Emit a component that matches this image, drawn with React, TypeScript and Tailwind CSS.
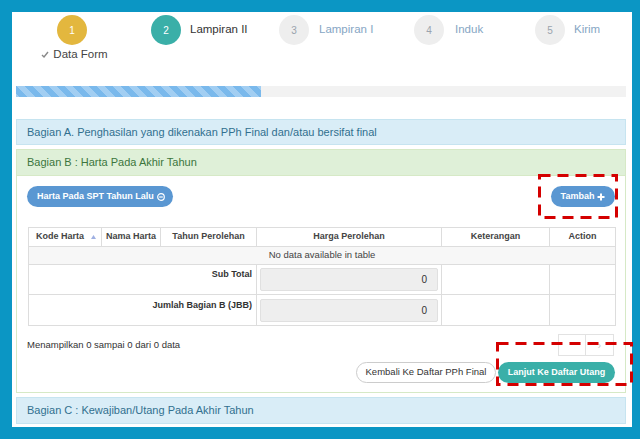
import React from "react";

const font = { fontFamily: '"Liberation Sans", Arial, sans-serif' };

function StepCircle({ n, tone }: { n: number; tone: "gold" | "teal" | "idle" }) {
  const cls =
    tone === "gold"
      ? "bg-[#e3b73e] text-white"
      : tone === "teal"
      ? "bg-[#3aafa8] text-white"
      : "bg-[#eeeeee] text-[#9aa3ad]";
  return (
    <div className={`flex h-[30px] w-[30px] shrink-0 items-center justify-center rounded-full text-[10px] ${cls}`}>
      {n}
    </div>
  );
}

function DashBox({ className }: { className: string }) {
  return (
    <svg className={`pointer-events-none absolute ${className}`} preserveAspectRatio="none">
      <rect
        x="1.5"
        y="1.5"
        width="calc(100% - 3px)"
        height="calc(100% - 3px)"
        fill="none"
        stroke="#d40000"
        strokeWidth="3"
        strokeDasharray="11 7"
      />
    </svg>
  );
}

function Stepper() {
  return (
    <div className="flex h-[74px] items-start pt-[3px]">
      <div className="ml-[26px] flex w-[60px] flex-col items-center">
        <StepCircle n={1} tone="gold" />
        <div className="ml-[5px] mt-[2px] flex items-center gap-[4px] whitespace-nowrap text-[11.5px] leading-[14px] text-[#444]">
          <svg width="8" height="7" viewBox="0 0 8 7">
            <polyline points="1,4 3,6 7,1" fill="none" stroke="#888" strokeWidth="1.4" />
          </svg>
          Data Form
        </div>
      </div>
      <div className="ml-[49px] flex w-[128px] items-center">
        <StepCircle n={2} tone="teal" />
        <span className="ml-[9px] whitespace-nowrap text-[11.5px] text-[#333]">Lampiran II</span>
      </div>
      <div className="flex w-[135px] items-center">
        <StepCircle n={3} tone="idle" />
        <span className="ml-[10px] whitespace-nowrap text-[11.5px] text-[#86a6c4]">Lampiran I</span>
      </div>
      <div className="flex w-[121px] items-center">
        <StepCircle n={4} tone="idle" />
        <span className="ml-[11px] whitespace-nowrap text-[11.5px] text-[#86a6c4]">Induk</span>
      </div>
      <div className="flex items-center">
        <StepCircle n={5} tone="idle" />
        <span className="ml-[9px] whitespace-nowrap text-[11.5px] text-[#86a6c4]">Kirim</span>
      </div>
    </div>
  );
}

function HargaInput() {
  return (
    <div className="flex h-[23px] items-center justify-end rounded-[2px] border border-[#e0e0e0] bg-[#eeeeee] pr-[10px] text-[10px] text-[#333]">
      0
    </div>
  );
}

export default function App() {
  return (
    <div style={font} className="relative h-[439px] w-[640px] overflow-hidden bg-[#0b96c4] pl-[12px] pr-[8px] pt-[12px]">
      <div className="h-[415px] bg-white pl-[4px] pr-[6px]">
        <Stepper />

        <div className="h-[11px] bg-[#f2f2f2]">
          <div className="h-full w-[245px] bg-[#7ab9ec] bg-[linear-gradient(45deg,rgba(255,255,255,.3)_25%,transparent_25%,transparent_50%,rgba(255,255,255,.3)_50%,rgba(255,255,255,.3)_75%,transparent_75%,transparent)] bg-[length:16px_16px]" />
        </div>

        <div className="mt-[22px] flex h-[26px] items-center border border-[#c6e4f0] bg-[#d9edf7] pl-[10px] text-[11px] text-[#31708f]">
          Bagian A. Penghasilan yang dikenakan PPh Final dan/atau bersifat final
        </div>

        <div className="mt-[4px] border border-[#d6e9c6]">
          <div className="flex h-[26px] items-center border-b border-[#d6e9c6] bg-[#dff0d8] pl-[10px] text-[11px] text-[#3c763d]">
            Bagian B : Harta Pada Akhir Tahun
          </div>
          <div className="pb-[9px] pl-[11px] pr-[10px] pt-[10px]">
            <div className="flex items-center justify-between">
              <button className="ml-[-1px] flex h-[21px] items-center gap-[3px] rounded-full bg-[#5a97d2] pl-[10px] pr-[8px] text-[9px] font-bold text-white">
                Harta Pada SPT Tahun Lalu
                <svg width="8" height="8" viewBox="0 0 8 8">
                  <circle cx="4" cy="4" r="3.3" fill="none" stroke="#fff" strokeWidth="1.2" />
                  <line x1="2.2" y1="4" x2="5.8" y2="4" stroke="#fff" strokeWidth="1.2" />
                </svg>
              </button>
              <button className="flex h-[21px] w-[64px] items-center justify-center gap-[3px] rounded-full bg-[#5a97d2] text-[9px] font-bold text-white">
                Tambah
                <svg width="8" height="8" viewBox="0 0 8 8">
                  <path d="M4 0.5v7M0.5 4h7" stroke="#fff" strokeWidth="2" />
                </svg>
              </button>
            </div>

            <table className="mt-[20px] w-[587px] table-fixed border-collapse text-[#333]">
              <colgroup>
                <col className="w-[73px]" />
                <col className="w-[59px]" />
                <col className="w-[96px]" />
                <col className="w-[185px]" />
                <col className="w-[108px]" />
                <col className="w-[66px]" />
              </colgroup>
              <thead>
                <tr className="h-[19px] text-[9px] font-bold text-[#444]">
                  <th className="border border-[#dddddd] pl-[7px] text-left">
                    <span className="flex items-center justify-between pr-[5px]">
                      Kode Harta
                      <svg width="5" height="4" viewBox="0 0 5 4">
                        <polygon points="2.5,0 5,4 0,4" fill="#9fb0e2" />
                      </svg>
                    </span>
                  </th>
                  <th className="border border-[#dddddd] text-center">Nama Harta</th>
                  <th className="border border-[#dddddd] text-center">Tahun Perolehan</th>
                  <th className="border border-[#dddddd] text-center">Harga Perolehan</th>
                  <th className="border border-[#dddddd] text-center">Keterangan</th>
                  <th className="border border-[#dddddd] text-center">Action</th>
                </tr>
              </thead>
              <tbody>
                <tr className="h-[18px] bg-[#f7f7f7]">
                  <td colSpan={6} className="border border-[#dddddd] text-center text-[9.5px] text-[#444]">
                    No data available in table
                  </td>
                </tr>
                <tr className="h-[30px]">
                  <td colSpan={3} className="border border-[#dddddd] pr-[4px] pt-[3px] text-right align-top text-[9px] font-bold">
                    Sub Total
                  </td>
                  <td className="border border-[#dddddd] px-[3px]">
                    <HargaInput />
                  </td>
                  <td className="border border-[#dddddd]" />
                  <td className="border border-[#dddddd]" />
                </tr>
                <tr className="h-[31px]">
                  <td colSpan={3} className="border border-[#dddddd] pr-[4px] pt-[4px] text-right align-top text-[9px] font-bold">
                    Jumlah Bagian B (JBB)
                  </td>
                  <td className="border border-[#dddddd] px-[3px]">
                    <HargaInput />
                  </td>
                  <td className="border border-[#dddddd]" />
                  <td className="border border-[#dddddd]" />
                </tr>
              </tbody>
            </table>

            <div className="mt-[8px] flex h-[22px] items-center justify-between">
              <span className="ml-[-1px] text-[9.5px] text-[#333]">Menampilkan 0 sampai 0 dari 0 data</span>
              <div className="mr-[1px] flex h-[22px]">
                <div className="w-[28px] border border-[#e2e2e2]" />
                <div className="flex w-[28px] items-center justify-center border border-l-0 border-[#e2e2e2] text-[10px] text-[#c8c8c8]">
                  ›
                </div>
              </div>
            </div>

            <div className="mt-[6px] flex justify-end gap-[2px]">
              <button className="h-[21px] w-[140px] rounded-full border border-[#cccccc] bg-white text-[9.5px] text-[#333]">
                Kembali Ke Daftar PPh Final
              </button>
              <button className="h-[21px] w-[117px] rounded-full bg-[#3aafa8] text-[9px] font-bold text-white">
                Lanjut Ke Daftar Utang
              </button>
            </div>
          </div>
        </div>

        <div className="mt-[4px] flex h-[27px] items-center border border-[#c6e4f0] bg-[#d9edf7] pl-[10px] text-[11px] text-[#31708f]">
          Bagian C : Kewajiban/Utang Pada Akhir Tahun
        </div>
      </div>

      <DashBox className="left-[538px] top-[174px] h-[45px] w-[80px]" />
      <DashBox className="left-[496px] top-[342px] h-[44px] w-[137px]" />
    </div>
  );
}
